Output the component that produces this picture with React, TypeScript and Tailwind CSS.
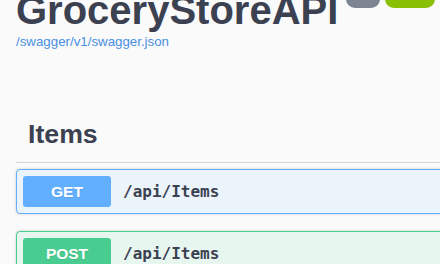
import React from 'react'

const ops = [
  { method: 'GET', path: '/api/Items', badge: 'bg-[#61affe]', block: 'border-[#61affe] bg-[#ebf3fb]' },
  { method: 'POST', path: '/api/Items', badge: 'bg-[#49cc90]', block: 'border-[#49cc90] bg-[#e8f6f0]' },
]

export default function App() {
  return (
    <div className="w-[440px] h-[264px] overflow-hidden bg-[#fafafa] font-['Liberation_Sans',Arial,sans-serif] text-[#3b4151]">
      <div className="w-[900px] pl-4">
        {/* Title */}
        <div className="flex items-start mt-[-10px]">
          <h2 className="text-[40px] leading-[40px] font-bold">GroceryStoreAPI</h2>
          <span className="ml-2 h-[18px] w-[34px] rounded-full bg-[#7d8492] text-white text-[11px] leading-[12px] text-center font-bold">v1</span>
          <span className="ml-[5px] h-[18px] w-[50px] rounded-full bg-[#89bf04] text-white text-[11px] leading-[12px] text-center font-bold">OAS3</span>
        </div>
        <a className="block mt-[4px] text-[13.3px] leading-4 text-[#4990e2]">/swagger/v1/swagger.json</a>

        {/* Tag */}
        <h3 className="mt-[68px] pl-3 pb-3 text-[26.7px] leading-8 font-bold border-b border-[#d3d4d8]">Items</h3>

        <div className="mt-[6px]">
          {ops.map((op, i) => (
            <div
              key={op.method}
              className={`flex items-center p-[6px] border rounded shadow-[0_0_3px_rgba(0,0,0,0.19)] ${op.block} ${i > 0 ? 'mt-[17px]' : ''}`}
            >
              <span className={`w-[88px] h-[31px] rounded-[3px] flex items-center justify-center text-white font-bold text-[15.5px] [text-shadow:0_1px_0_rgba(0,0,0,0.1)] ${op.badge}`}>
                {op.method}
              </span>
              <span className="ml-3 font-['DejaVu_Sans_Mono',monospace] font-bold text-[16px] text-[#3b4151]">{op.path}</span>
            </div>
          ))}
        </div>
      </div>
    </div>
  )
}
